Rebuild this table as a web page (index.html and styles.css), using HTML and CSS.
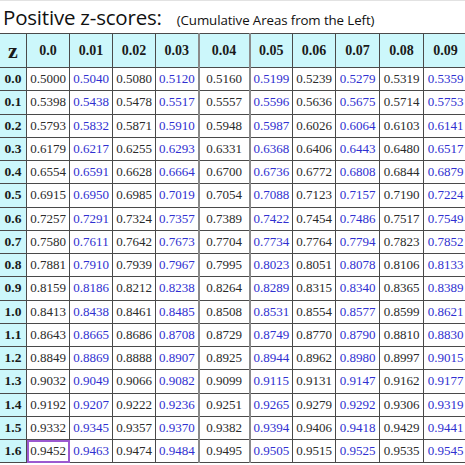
FILE: index.html
```html
<!DOCTYPE html>
<html lang="en">
  <head>
    <meta charset="UTF-8" />
    <meta name="viewport" content="width=device-width, initial-scale=1.0" />
    <title>Positive z-scores</title>
    <link rel="stylesheet" href="styles.css">
  </head>
  <body>
    <div class="title">
      <h1>Positive z-scores:</h1>
      <span class="sub">(Cumulative Areas from the Left)</span>
    </div>
    <table class="ztable">
      <colgroup>
        <col class="c-z" />
        <col class="c-n" /><col class="c-n" /><col class="c-n" /><col class="c-n" />
        <col class="c-w" />
        <col class="c-n" /><col class="c-n" /><col class="c-m" /><col class="c-m" /><col class="c-m" />
      </colgroup>
      <thead>
        <tr>
          <th class="zh">z</th>
          <th>0.0</th><th>0.01</th><th>0.02</th><th>0.03</th><th class="mid">0.04</th>
          <th>0.05</th><th>0.06</th><th>0.07</th><th>0.08</th><th>0.09</th>
        </tr>
      </thead>
      <tbody id="rows"></tbody>
    </table>

    <script>
      const data = [
        ["0.0", "0.5000 0.5040 0.5080 0.5120 0.5160 0.5199 0.5239 0.5279 0.5319 0.5359"],
        ["0.1", "0.5398 0.5438 0.5478 0.5517 0.5557 0.5596 0.5636 0.5675 0.5714 0.5753"],
        ["0.2", "0.5793 0.5832 0.5871 0.5910 0.5948 0.5987 0.6026 0.6064 0.6103 0.6141"],
        ["0.3", "0.6179 0.6217 0.6255 0.6293 0.6331 0.6368 0.6406 0.6443 0.6480 0.6517"],
        ["0.4", "0.6554 0.6591 0.6628 0.6664 0.6700 0.6736 0.6772 0.6808 0.6844 0.6879"],
        ["0.5", "0.6915 0.6950 0.6985 0.7019 0.7054 0.7088 0.7123 0.7157 0.7190 0.7224"],
        ["0.6", "0.7257 0.7291 0.7324 0.7357 0.7389 0.7422 0.7454 0.7486 0.7517 0.7549"],
        ["0.7", "0.7580 0.7611 0.7642 0.7673 0.7704 0.7734 0.7764 0.7794 0.7823 0.7852"],
        ["0.8", "0.7881 0.7910 0.7939 0.7967 0.7995 0.8023 0.8051 0.8078 0.8106 0.8133"],
        ["0.9", "0.8159 0.8186 0.8212 0.8238 0.8264 0.8289 0.8315 0.8340 0.8365 0.8389"],
        ["1.0", "0.8413 0.8438 0.8461 0.8485 0.8508 0.8531 0.8554 0.8577 0.8599 0.8621"],
        ["1.1", "0.8643 0.8665 0.8686 0.8708 0.8729 0.8749 0.8770 0.8790 0.8810 0.8830"],
        ["1.2", "0.8849 0.8869 0.8888 0.8907 0.8925 0.8944 0.8962 0.8980 0.8997 0.9015"],
        ["1.3", "0.9032 0.9049 0.9066 0.9082 0.9099 0.9115 0.9131 0.9147 0.9162 0.9177"],
        ["1.4", "0.9192 0.9207 0.9222 0.9236 0.9251 0.9265 0.9279 0.9292 0.9306 0.9319"],
        ["1.5", "0.9332 0.9345 0.9357 0.9370 0.9382 0.9394 0.9406 0.9418 0.9429 0.9441"],
        ["1.6", "0.9452 0.9463 0.9474 0.9484 0.9495 0.9505 0.9515 0.9525 0.9535 0.9545"],
      ]

      const tbody = document.getElementById("rows")
      data.forEach(([z, vals]) => {
        const tr = document.createElement("tr")
        const th = document.createElement("th")
        th.className = "rz"
        th.textContent = z
        tr.appendChild(th)
        vals.split(" ").forEach((v, i) => {
          const td = document.createElement("td")
          td.textContent = v
          // odd columns are printed in blue
          if (i % 2 === 1) td.classList.add("blue")
          if (i === 4) td.classList.add("mid")
          if (z === "1.6" && i === 0) td.classList.add("picked")
          tr.appendChild(td)
        })
        tbody.appendChild(tr)
      })
    </script>
  </body>
</html>
```

FILE: styles.css
```css
html,
body {
  margin: 0;
  padding: 0;
  background: #fff;
  overflow: hidden;
}

body {
  width: 465px;
  height: 465px;
  border-top: 1px solid #e2e2e2;
  box-sizing: border-box;
}

.title {
  display: flex;
  align-items: baseline;
  gap: 15px;
  height: 32px;
  padding-left: 3px;
  font-family: "Open Sans", "Noto Sans", sans-serif;
  color: #111;
}

.title h1 {
  margin: 0;
  font-size: 20.5px;
  font-weight: normal;
  line-height: 32px;
  letter-spacing: -0.2px;
}

.title .sub {
  font-size: 13.3px;
  letter-spacing: -0.1px;
}

.ztable {
  border-collapse: collapse;
  table-layout: fixed;
  width: 467px;
  margin-left: -1px;
  font-family: "Liberation Serif", "Times New Roman", serif;
}

.c-z { width: 27px; }
.c-n { width: 43px; }
.c-w { width: 51px; }
.c-m { width: 44px; }

.ztable th,
.ztable td {
  border: 1px solid #4a4a4a;
  padding: 0;
  text-align: center;
  white-space: nowrap;
  overflow: hidden;
}

.ztable thead th {
  height: 33px;
  background: #ccf7fb;
  font-size: 14px;
  font-weight: bold;
  color: #1a1a1a;
}

.ztable thead .zh {
  font-size: 22px;
  line-height: 1;
}

.ztable tbody tr {
  height: 23.25px;
}

.ztable .rz {
  background: #ccf7fb;
  font-size: 13.5px;
  font-weight: bold;
  color: #1a1a1a;
}

.ztable td {
  font-size: 13px;
  color: #2a2a2a;
}

.ztable td.blue {
  color: #2f2fd0;
}

.ztable .mid {
  border-left: 2px solid #8a8a8a;
  border-right: 2px solid #8a8a8a;
}

.ztable td.picked {
  outline: 2px solid #9b59d0;
  outline-offset: -2px;
}
```
